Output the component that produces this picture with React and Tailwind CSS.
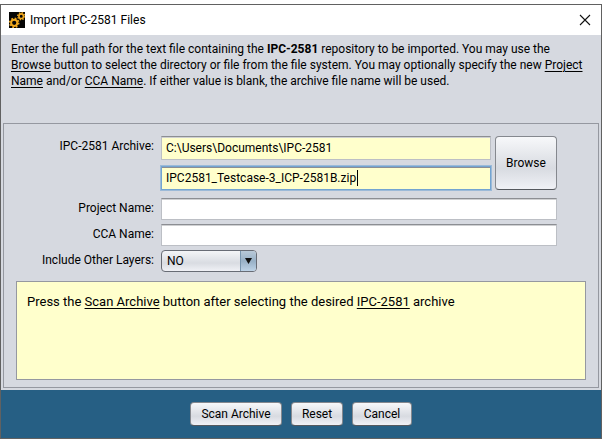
import React from "react";

const field =
  "block w-full min-w-0 border border-[#bcbfc5] border-t-[#8c8e93] px-1 shadow-[inset_0_1px_0_#cfd0d2] outline-none";
const button =
  "rounded border border-[#85888e] border-b-[#55585e] bg-linear-to-b from-[#f7f8fa] via-[#d8dbe1] via-60% to-[#f0f1f6] text-black";

function GearIcon() {
  return (
    <svg viewBox="0 0 16 16" className="size-4 shrink-0" aria-hidden="true">
      <rect width="16" height="16" fill="#050505" />
      <g fill="none" stroke="#f0a81e">
        <circle cx="5.2" cy="10.8" r="3.1" strokeWidth="2" />
        <circle cx="5.2" cy="10.8" r="4.500" strokeWidth="1.6" strokeDasharray="1.7 1.834" />
        <circle cx="12.2" cy="4.2" r="2.300" strokeWidth="1.6" />
        <circle cx="12.2" cy="4.2" r="3.5" strokeWidth="1.3" strokeDasharray="1.4 1.349" />
      </g>
    </svg>
  );
}

function Label({ htmlFor, children }) {
  return (
    <label htmlFor={htmlFor} className="text-right leading-5">
      {children}
    </label>
  );
}

export default function App() {
  return (
    <div className="flex min-h-screen flex-col bg-white pt-1 pb-[3px] font-['Roboto','Open_Sans',sans-serif] text-xs text-black">
      <main className="flex flex-1 flex-col border border-[#616161] bg-[#d6d9e0]">
        <header className="flex h-[30px] items-center gap-[5px] bg-white px-2">
          <GearIcon />
          <h1 className="flex-1">Import IPC-2581 Files</h1>
          <button type="button" aria-label="Close" className="flex size-4 items-center justify-center">
            <svg viewBox="0 0 12 12" className="size-3" fill="none" stroke="#111" strokeWidth="1.1" aria-hidden="true">
              <path d="M1 1l10 10M11 1L1 11" />
            </svg>
          </button>
        </header>

        <p className="px-2.5 pt-1.5 leading-4">
          Enter the full path for the text file containing the <b>IPC-2581</b> repository to be imported. You may use the
          <br />
          <u className="underline-offset-2">Browse</u> button to select the directory or file from the file system. You may optionally specify the new{" "}
          <u className="underline-offset-2">Project</u>
          <br />
          <u className="underline-offset-2">Name</u> and/or <u className="underline-offset-2">CCA Name</u>. If either value is blank, the archive file name will be used.
        </p>

        <form className="mx-0.5 mt-auto mb-0.5 flex flex-col border border-[#9598a0] px-3 pt-3 pb-[7px]">
          <div className="grid grid-cols-[138px_1fr] gap-x-[7px] gap-y-1 pr-[29px]">
            <Label htmlFor="archive">IPC-2581 Archive:</Label>
            <div className="mb-1 flex gap-1">
              <div className="flex flex-1 flex-col gap-1.5">
                <input id="archive" defaultValue="C:\Users\Documents\IPC-2581" className={`${field} h-6 bg-[#ffffcc]`} />
                <div className="relative">
                  <input
                    aria-label="Archive file name"
                    defaultValue="IPC2581_Testcase-3_ICP-2581B.zip"
                    className="block h-6 w-full min-w-0 border border-[#73a4d1] bg-[#ffffcc] px-1 shadow-[inset_0_1px_0_#8c8e93,0_0_0_1px_#9cbad8] outline-none"
                  />
                  <span className="absolute top-1 left-[196px] h-4 w-px bg-black" />
                </div>
              </div>
              <button type="button" className={`${button} w-[62px]`}>
                Browse
              </button>
            </div>
            <Label htmlFor="project">Project Name:</Label>
            <input id="project" className={`${field} h-[22px] bg-white`} />
            <Label htmlFor="cca">CCA Name:</Label>
            <input id="cca" className={`${field} h-[22px] bg-white`} />
            <Label htmlFor="layers">Include Other Layers:</Label>
            <div className="relative w-24">
              <select
                id="layers"
                className="block h-[22px] w-full appearance-none rounded border border-[#686c75] bg-linear-to-b from-[#f4f5f7] via-[#d9dce2] via-60% to-[#f0f1f6] pl-[5px] outline-none"
              >
                <option>NO</option>
                <option>YES</option>
              </select>
              <span className="pointer-events-none absolute inset-y-px right-px flex w-4 items-center justify-center rounded-r-[3px] border-l border-[#7895ae] bg-linear-to-b from-[#b9c9d8] via-[#98b0c6] to-[#bed3e7]">
                <svg viewBox="0 0 7 6" className="h-1.5 w-[7px]" aria-hidden="true">
                  <path d="M0 0h7L3.500 6z" fill="#111" />
                </svg>
              </span>
            </div>
          </div>
          <div className="mt-[9px] h-[99px] border border-[#9598a0] bg-[#ffffcc] px-2.5 py-2.5 text-[13px] leading-5">
            Press the <u className="underline-offset-2">Scan Archive</u> button after selecting the desired <u className="underline-offset-2">IPC-2581</u> archive
          </div>
        </form>

        <footer className="flex h-12 items-center justify-center gap-[9px] bg-[#265f84]">
          <button type="button" className={`${button} h-6 w-[92px]`}>Scan Archive</button>
          <button type="button" className={`${button} h-6 w-[52px]`}>Reset</button>
          <button type="button" className={`${button} h-6 w-[60px]`}>Cancel</button>
        </footer>
      </main>
    </div>
  );
}
